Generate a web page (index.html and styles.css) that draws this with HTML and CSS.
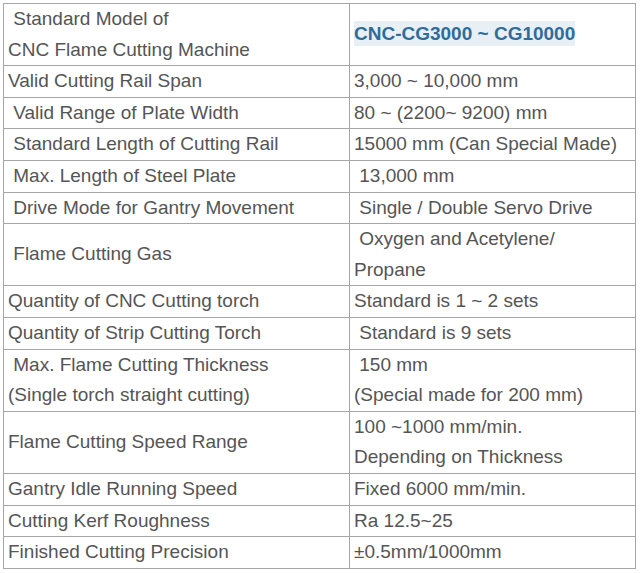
FILE: index.html
```html
<!DOCTYPE html>
<html>
<head>
<meta charset="utf-8">
<link rel="stylesheet" href="styles.css">
</head>
<body>
<table class="spec">
<colgroup><col class="c1"><col class="c2"></colgroup>
<tr class="dbl"><td>&nbsp;Standard Model of<br>CNC Flame Cutting Machine</td><td><span class="model">CNC-CG3000 ~ CG10000</span></td></tr>
<tr><td>Valid Cutting Rail Span</td><td>3,000 ~ 10,000 mm</td></tr>
<tr><td>&nbsp;Valid Range of Plate Width</td><td>80 ~ (2200~ 9200) mm</td></tr>
<tr><td>&nbsp;Standard Length of Cutting Rail</td><td>15000 mm (Can Special Made)</td></tr>
<tr><td>&nbsp;Max. Length of Steel Plate</td><td>&nbsp;13,000 mm</td></tr>
<tr><td>&nbsp;Drive Mode for Gantry Movement</td><td>&nbsp;Single / Double Servo Drive</td></tr>
<tr class="dbl"><td>&nbsp;Flame Cutting Gas</td><td>&nbsp;Oxygen and Acetylene/<br>Propane</td></tr>
<tr><td>Quantity of CNC Cutting torch</td><td>Standard is 1 ~ 2 sets</td></tr>
<tr><td>Quantity of Strip Cutting Torch</td><td>&nbsp;Standard is 9 sets</td></tr>
<tr class="dbl"><td>&nbsp;Max. Flame Cutting Thickness<br>(Single torch straight cutting)</td><td>&nbsp;150 mm<br>(Special made for 200 mm)</td></tr>
<tr class="dbl"><td>Flame Cutting Speed Range</td><td>100 ~1000 mm/min.<br>Depending on Thickness</td></tr>
<tr><td>Gantry Idle Running Speed</td><td>Fixed 6000 mm/min.</td></tr>
<tr><td>Cutting Kerf Roughness</td><td>Ra 12.5~25</td></tr>
<tr><td>Finished Cutting Precision</td><td>±0.5mm/1000mm</td></tr>
</table>
</body>
</html>
```
FILE: styles.css
```css
html, body {
  margin: 0;
  padding: 0;
  background: #fff;
}
body {
  padding: 3px 0 0 3px;
}
.spec {
  border-collapse: collapse;
  width: 632px;
  table-layout: fixed;
  font-family: "Liberation Sans", Arial, sans-serif;
  font-size: 19px;
  color: #555;
  border: 1px solid #a6a6a6;
}
.c1 { width: 346px; }
.c2 { width: 286px; }
.spec td {
  border: 1px solid #a6a6a6;
  padding: 0 4px;
  line-height: 30.6px;
  vertical-align: middle;
  white-space: nowrap;
  overflow: hidden;
}
.model {
  font-weight: bold;
  color: #2f6c9c;
  background: #e8f0f6;
  padding: 2px 0;
}
```
